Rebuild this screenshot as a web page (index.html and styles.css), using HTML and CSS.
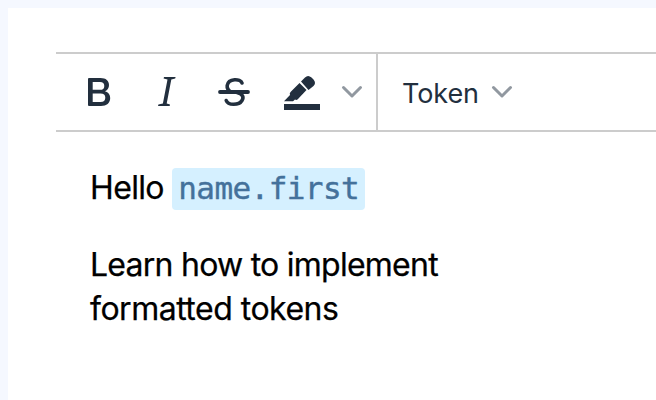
FILE: index.html
```html
<!DOCTYPE html>
<html lang="en">
<head>
<meta charset="utf-8">
<title>Token editor</title>
<link rel="stylesheet" href="styles.css">
</head>
<body>
<main class="panel">
  <div class="toolbar">
    <div class="group formats">
      <svg class="icons" width="320" height="76" viewBox="56 54 320 76" role="img" aria-label="Bold, italic, strikethrough, text highlight">
        <path fill="#222f3e" fill-rule="evenodd" d="M89 78H100.500C106 78 109 80.800 109 85Q109 89.500 105 91.200Q110.200 92.800 110.200 98C110.200 103 106.500 106 101 106H89Q88 106 88 105V79Q88 78 89 78ZM92.700 82V89.800H100Q104.300 89.800 104.300 85.900T100 82ZM92.700 93.600V102H100.500Q105.300 102 105.300 97.800T100.500 93.600Z"/>
        <path fill="#222f3e" d="M164 77H175.600L175.200 78.600L171.300 79.400L166.700 103.500L170 104.400L169.700 106H158L158.400 104.400L162.900 103.500L167.500 79.400L163.600 78.600Z"/>
        <g fill="none" stroke="#222f3e" stroke-linecap="round">
          <path stroke-width="3.600" d="M242 83C240.500 78.500 228.500 78 227.200 85.500Q226.700 89.500 231 92M237 92.500C243 94 244 97.500 242 100.500C239 105.500 228 105.500 226.200 100.500"/>
          <path stroke-width="3.800" d="M220 92H248"/>
        </g>
        <path fill="#222f3e" d="M284 104h36v6h-36zM284 101.300L290 95Q289 93 291 91.500L299.500 83L306.500 90L298 99Q296.500 100.500 295 99.500L293 101.300ZM301 81.500L305 77.500Q308 74.500 311.500 77.500L313.500 79.500Q316.500 83 313.500 86L308.500 90Z"/>
        <path class="chevron" d="M343.500 87.500l8.500 8.500 8.500-8.500"/>
      </svg>
    </div>
    <div class="group token"><span>Token</span>
      <svg width="22" height="14" viewBox="0 0 22 14"><path class="chevron" d="M2.500 2.500l8.500 8.500 8.500-8.500"/></svg>
    </div>
  </div>
  <article class="content">
    <p>Hello <code>name.first</code></p>
    <p><span class="lead">Learn how to implement</span><br>formatted tokens</p>
  </article>
</main>
</body>
</html>
```

FILE: styles.css
```css
body { margin: 0; background: #f5f8ff; font-family: Inter, sans-serif; overflow: hidden; }
.panel { margin: 8px 0 0 8px; padding: 44px 0 0 48px; height: 348px; background: #fff; }
.toolbar { display: flex; height: 76px; border-top: 2px solid #ccc; border-bottom: 2px solid #ccc; }
.formats { width: 320px; border-right: 2px solid #ccc; }
.icons { display: block; }
.chevron { fill: none; stroke: #9198a0; stroke-width: 3; stroke-linecap: round; stroke-linejoin: round; }
.token { display: flex; align-items: center; gap: 12px; padding-left: 24px; font-size: 27px; letter-spacing: -0.1px; color: #222f3e; }
.token span { padding-top: 2px; }
.content { padding: 34px 34px 0; font-size: 32px; line-height: 44px; letter-spacing: -0.5px; color: #000; -webkit-text-stroke: 0.25px #000; }
.content p { margin: 0 0 33px; white-space: nowrap; }
.content p:first-child { letter-spacing: -0.65px; }
.lead { letter-spacing: -0.75px; }
code { font-family: "DejaVu Sans Mono", monospace; font-size: 31px; letter-spacing: -0.58px; background: #d5f0ff; color: #44719b; border-radius: 4px; padding: 2px 6px 4px; -webkit-text-stroke: 0.4px #44719b; }
```
